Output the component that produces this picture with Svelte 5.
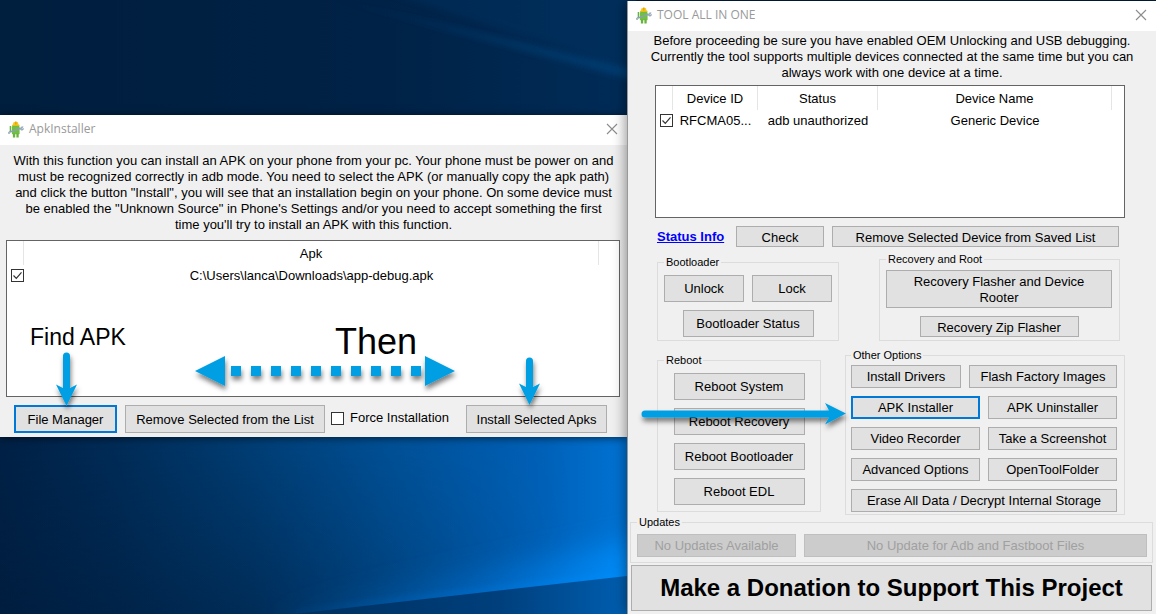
<script>
  let apkChecked = $state(true);
  let deviceChecked = $state(true);
  let force = $state(false);
  const reboots = ['Reboot System', 'Reboot Recovery', 'Reboot Bootloader', 'Reboot EDL'];
  const options = ['APK Installer', 'APK Uninstaller', 'Video Recorder', 'Take a Screenshot', 'Advanced Options', 'OpenToolFolder'];
</script>

{#snippet appIcon()}
  <svg class="app-icon" viewBox="0 0 16 17" aria-hidden="true">
    <path d="M4.200 6.500V4h7v2.500z" fill="#6cb842" />
    <path d="M4.800 3.600a3 3 0 0 1 5.900 0l.8.300v.9H4v-.9z" fill="#f7c51e" />
    <path d="M5.500 1.200h4.600v2.200H5.500z" fill="#f7c51e" />
    <path d="M7 .4h1.600v3H7z" fill="#e9a800" />
    <rect x="3.900" y="5.600" width="7.700" height="7.600" rx=".6" fill="#72bf44" />
    <path d="M4.900 12.500h2.300v4H4.900zM8.400 12.500h2.300v4H8.400zM1.700 5h1.500v6H1.700z" fill="#67b33c" />
    <path d="M1.200 11.300 12.600 7.400" stroke="#8ba0b3" stroke-width="1.500" />
    <path d="M15.200 5.900 13.500 7.200l.5.900 1.700-.5c-.3 1.500-2 2-3.100 1.200l-.2-1.600c.5-1.100 1.600-1.600 2.800-1.300" fill="#a3b4c2" stroke="#8ba0b3" stroke-width=".6" />
    <path d="M1.700 10.600.5 11.200v1.300l1.600-.3" fill="none" stroke="#9bacbb" stroke-width="1" />
  </svg>
{/snippet}

{#snippet closeIcon()}
  <svg viewBox="0 0 12 12" width="12" height="12" aria-hidden="true"><path d="M1 1l10 10M11 1 1 11" stroke="#8c8c8c" stroke-width="1.1" /></svg>
{/snippet}

<div class="desktop">
  <svg class="wallpaper" viewBox="0 0 627 614" preserveAspectRatio="none" aria-hidden="true">
    <defs>
      <linearGradient id="sky" x1="0" x2="1"><stop offset="0" stop-color="#001e3e" /><stop offset=".6" stop-color="#002246" /><stop offset="1" stop-color="#002c58" /></linearGradient>
      <linearGradient id="floor" x1="0" x2="1"><stop offset="0" stop-color="#002146" /><stop offset=".18" stop-color="#002c58" /><stop offset=".35" stop-color="#003b70" /><stop offset=".6" stop-color="#005096" /><stop offset=".85" stop-color="#0061b8" /><stop offset="1" stop-color="#0074d6" /></linearGradient>
      <linearGradient id="dusk" x1="0" x2="0" y1="0" y2="1"><stop offset="0" stop-color="#001a38" stop-opacity="0" /><stop offset="1" stop-color="#001a38" stop-opacity=".5" /></linearGradient>
      <linearGradient id="fade" x1="0" x2="1"><stop offset=".4" stop-color="#fff" /><stop offset=".9" stop-color="#fff" stop-opacity="0" /></linearGradient>
      <mask id="left"><rect width="627" height="614" fill="url(#fade)" /></mask>
      <linearGradient id="beam" gradientUnits="userSpaceOnUse" x1="250" y1="0" x2="627" y2="0"><stop offset="0" stop-color="#0064b8" stop-opacity="0" /><stop offset=".6" stop-color="#0074d8" stop-opacity=".5" /><stop offset="1" stop-color="#0090ff" stop-opacity=".9" /></linearGradient>
      <linearGradient id="shade" gradientUnits="userSpaceOnUse" x1="290" y1="0" x2="627" y2="0"><stop offset="0" stop-color="#00305e" /><stop offset=".6" stop-color="#003f7c" /><stop offset="1" stop-color="#0061b4" /></linearGradient>
      <linearGradient id="ray" x1="0" x2="1"><stop offset="0" stop-color="#0a4076" stop-opacity=".1" /><stop offset="1" stop-color="#0a4a86" stop-opacity=".6" /></linearGradient>
      <filter id="soft" filterUnits="userSpaceOnUse" x="-40" y="-40" width="707" height="694"><feGaussianBlur stdDeviation="3" /></filter>
      <filter id="wide" filterUnits="userSpaceOnUse" x="-40" y="-40" width="707" height="694"><feGaussianBlur stdDeviation="14" /></filter>
    </defs>
    <rect width="627" height="300" fill="url(#sky)" />
    <path d="M290 -10 L640 72 V84 L330 0z" fill="url(#ray)" filter="url(#soft)" />
    <path d="M340 -20H660V80z" fill="#003666" opacity=".35" filter="url(#soft)" />
    <rect y="300" width="627" height="314" fill="url(#floor)" />
    <rect y="430" width="627" height="184" fill="url(#dusk)" mask="url(#left)" />
    <path d="M250 614 L660 535 V590 L290 625z" fill="url(#beam)" filter="url(#wide)" />
    <path d="M290 613 L627 574" stroke="url(#beam)" stroke-width="7" filter="url(#soft)" />
    <path d="M290 614 L627 575 V614z" fill="url(#shade)" />
  </svg>

  <section class="window installer">
    <header>
      {@render appIcon()}<h1>ApkInstaller</h1>
      <button class="close" aria-label="Close ApkInstaller">{@render closeIcon()}</button>
    </header>
    <p class="intro">
      With this function you can install an APK on your phone from your pc. Your phone must be power on and<br />
      must be recognized correctly in adb mode. You need to select the APK (or manually copy the apk path)<br />
      and click the button "Install", you will see that an installation begin on your phone. On some device must<br />
      be enabled the "Unknown Source" in Phone's Settings and/or you need to accept something the first<br />
      time you'll try to install an APK with this function.
    </p>
    <div class="list">
      <table>
        <colgroup><col class="tick" /><col /><col class="end" /></colgroup>
        <thead><tr><th></th><th>Apk</th><td></td></tr></thead>
        <tbody><tr><td class="tick"><input type="checkbox" aria-label="Select app-debug.apk" bind:checked={apkChecked} /></td><td>C:\Users\lanca\Downloads\app-debug.apk</td><td></td></tr></tbody>
      </table>
    </div>
    <div class="actions">
      <button class="focus file">File Manager</button>
      <button class="remove">Remove Selected from the List</button>
      <label><input type="checkbox" bind:checked={force} />Force Installation</label>
      <button>Install Selected Apks</button>
    </div>
  </section>

  <section class="window tool">
    <header>
      {@render appIcon()}<h1>TOOL ALL IN ONE</h1>
      <button class="close" aria-label="Close Tool All In One">{@render closeIcon()}</button>
    </header>
    <p class="intro">
      Before proceeding be sure you have enabled OEM Unlocking and USB debugging.<br />
      Currently the tool supports multiple devices connected at the same time but you can<br />
      always work with one device at a time.
    </p>
    <div class="list">
      <table>
        <colgroup><col class="tick" /><col class="id" /><col class="status" /><col /><col class="tail" /></colgroup>
        <thead><tr><th></th><th>Device ID</th><th>Status</th><th>Device Name</th><td></td></tr></thead>
        <tbody><tr><td class="tick"><input type="checkbox" aria-label="Select device" bind:checked={deviceChecked} /></td><td>RFCMA05...</td><td>adb unauthorized</td><td>Generic Device</td><td></td></tr></tbody>
      </table>
    </div>
    <div class="device-bar">
      <a href="#status">Status Info</a>
      <button>Check</button>
      <button>Remove Selected Device from Saved List</button>
    </div>
    <div class="groups upper">
      <fieldset>
        <legend>Bootloader</legend>
        <div class="pair tall"><button>Unlock</button><button>Lock</button></div>
        <button class="mid">Bootloader Status</button>
      </fieldset>
      <fieldset class="recovery">
        <legend>Recovery and Root</legend>
        <button class="two-line">Recovery Flasher and Device Rooter</button>
        <button class="zip">Recovery Zip Flasher</button>
      </fieldset>
    </div>
    <div class="groups lower">
      <fieldset class="reboot">
        <legend>Reboot</legend>
        {#each reboots as name}<button class="mid">{name}</button>{/each}
      </fieldset>
      <fieldset class="other">
        <legend>Other Options</legend>
        <div class="drivers"><button>Install Drivers</button><button>Flash Factory Images</button></div>
        <div class="pair">
          {#each options as name, i}<button class:focus={i === 0}>{name}</button>{/each}
        </div>
        <button>Erase All Data / Decrypt Internal Storage</button>
      </fieldset>
    </div>
    <fieldset class="updates">
      <legend>Updates</legend>
      <div><button disabled>No Updates Available</button><button disabled>No Update for Adb and Fastboot Files</button></div>
    </fieldset>
    <button class="donate">Make a Donation to Support This Project</button>
  </section>

  <span class="note find">Find APK</span>
  <span class="note then">Then</span>
  <svg class="arrows" viewBox="0 0 1156 614" width="1156" height="614" aria-hidden="true">
    <defs>
      <filter id="drop" filterUnits="userSpaceOnUse" x="0" y="300" width="1156" height="160"><feDropShadow dx="1" dy="4" stdDeviation="2.500" flood-color="#000" flood-opacity=".5" /></filter>
    </defs>
    <g fill="#009fe3" filter="url(#drop)">
      <path d="M63 356a3.500 3.500 0 0 1 7 0V388L77 384.500 66.500 406 56 384.500 63 388z" />
      <path d="M526 361a3.500 3.500 0 0 1 7 0V387L540 383.500 529.500 405 519 383.500 526 387z" />
      <path d="M645 410.500a3.500 3.500 0 0 0 0 7H829L825 424.500 846 413.500 825 403 829 410.500z" />
      <path d="M195 371 225 356V386zM455 371 425 356V386z" />
      {#each Array(10) as _, i}<rect x={231 + i * 20} y="366" width="10" height="10" />{/each}
    </g>
  </svg>
</div>

<style>
  :global(body) { margin: 0; }
  .desktop { position: relative; display: grid; grid-template-columns: 627fr 529fr; align-items: start; min-height: 100vh; overflow: hidden; background: #001e3e; font: 13px/16px "Liberation Sans", Arial, sans-serif; color: #000; }
  .desktop * { box-sizing: border-box; }
  .wallpaper { position: absolute; left: 0; top: 0; width: 55%; height: 100%; }
  .window { position: relative; background: #f0f0f0; white-space: nowrap; }
  .installer { margin-top: 115px; padding-bottom: 4px; box-shadow: 0 1px 8px #0009; }
  .tool { margin-top: 1px; min-height: calc(100vh - 1px); padding-bottom: 3px; border-left: 1px solid #999; box-shadow: -2px 0 12px #0006; }
  header { display: flex; align-items: center; height: 30px; padding: 0 9px 2px 8px; background: #fff; }
  .app-icon { width: 16px; height: 17px; }
  h1 { flex: 1; margin: 0 0 0 5px; font: 12px/16px "Open Sans", "Noto Sans", sans-serif; color: #999; }
  .intro { margin: 0; text-align: center; }
  .installer .intro { padding: 8px 0 7px; }
  .tool .intro { padding: 2px 0 4px; }
  .list { border: 1px solid #646464; background: #fff; }
  .installer .list { height: 157px; margin: 0 7px 8px 6px; }
  .tool .list { height: 133px; margin: 0 31px 8px 27px; }
  table { width: 100%; table-layout: fixed; border-collapse: separate; border-spacing: 0; text-align: center; }
  th, td { padding: 2px 0 0; font-weight: 400; height: 20px; }
  thead th, thead td { height: 24px; }
  th { border-right: 1px solid #e5e5e5; }
  col.tick { width: 17px; }
  col.end { width: 20px; }
  col.id { width: 85px; }
  col.status { width: 120px; }
  col.tail { width: 12px; }
  td.tick { padding: 0 0 0 4px; }
  input { appearance: none; display: block; width: 13px; height: 13px; margin: 0; flex: none; border: 1px solid #333; background: #fff; }
  input:checked { background: #fff url("data:image/svg+xml,%3Csvg xmlns='http://www.w3.org/2000/svg' viewBox='0 0 11 11'%3E%3Cpath d='M1.500 5.500l2.800 2.800 5.200-6' fill='none' stroke='%23333' stroke-width='1.200'/%3E%3C/svg%3E") center / 11px 11px; }
  button { font: inherit; color: inherit; height: 23px; padding: 0; border: 1px solid #adadad; background: #e1e1e1; }
  button.focus { border: 2px solid #0078d7; }
  button:disabled { color: #a0a0a0; background: #ccc; border-color: #bfbfbf; }
  .close { display: flex; align-items: center; height: 20px; border: 0; background: none; }
  .actions { display: grid; grid-template-columns: 111fr 206fr 135fr 141fr; align-items: center; padding: 0 20px 0 14px; }
  .actions button { height: 28px; padding-top: 2px; }
  .file { margin-right: 8px; }
  .remove { margin-right: 6px; }
  .actions label { display: flex; align-items: center; gap: 6px; padding-bottom: 2px; }
  .device-bar { display: grid; grid-template-columns: 71fr 88fr 287fr; gap: 8px; align-items: center; padding: 0 37px 0 29px; }
  .device-bar a { color: #00f; font-weight: 700; }
  .device-bar button { height: 21px; padding-top: 2px; }
  .groups { display: grid; }
  .upper { grid-template-columns: 182fr 241fr; gap: 40px; align-items: end; padding: 5px 36px 0 29px; }
  .lower { grid-template-columns: 164fr 280fr; gap: 24px; align-items: start; padding: 7px 31px 0 29px; }
  fieldset { display: flex; flex-direction: column; align-items: stretch; gap: 8px; min-width: 0; margin: 0; padding: 6px 6px 3px; border: 1px solid #dcdcdc; }
  legend { height: 14px; padding: 0 2px; font-size: 11px; line-height: 14px; }
  .pair { display: grid; grid-template-columns: 1fr 1fr; gap: 8px; }
  .tall button, .mid { height: 27px; }
  .mid { align-self: center; width: 131px; }
  fieldset.recovery { padding: 4px 7px 3px 6px; }
  .two-line { height: 38px; padding: 2px 16px 0; white-space: normal; }
  .zip { align-self: center; width: 159px; height: 21px; padding-top: 2px; }
  fieldset.reboot { margin-top: 5px; padding-bottom: 6px; }
  fieldset.other { padding: 3px 7px 2px 5px; }
  .drivers { display: grid; grid-template-columns: 110fr 148fr; gap: 8px; }
  fieldset.updates { margin: 0 3px 2px 2px; padding: 5px 5px 5px 6px; }
  .updates div { display: grid; grid-template-columns: 159fr 343fr; gap: 8px; }
  .donate { display: block; width: calc(100% - 7px); height: 46px; margin: 0 4px 0 3px; font-size: 24px; line-height: 28px; font-weight: 700; }
  .note { position: absolute; white-space: nowrap; }
  .find { left: 30px; top: 324px; font-size: 23px; line-height: 26px; }
  .then { left: 335px; top: 321px; font-size: 36px; line-height: 42px; }
  .arrows { position: absolute; left: 0; top: 0; pointer-events: none; }
</style>
